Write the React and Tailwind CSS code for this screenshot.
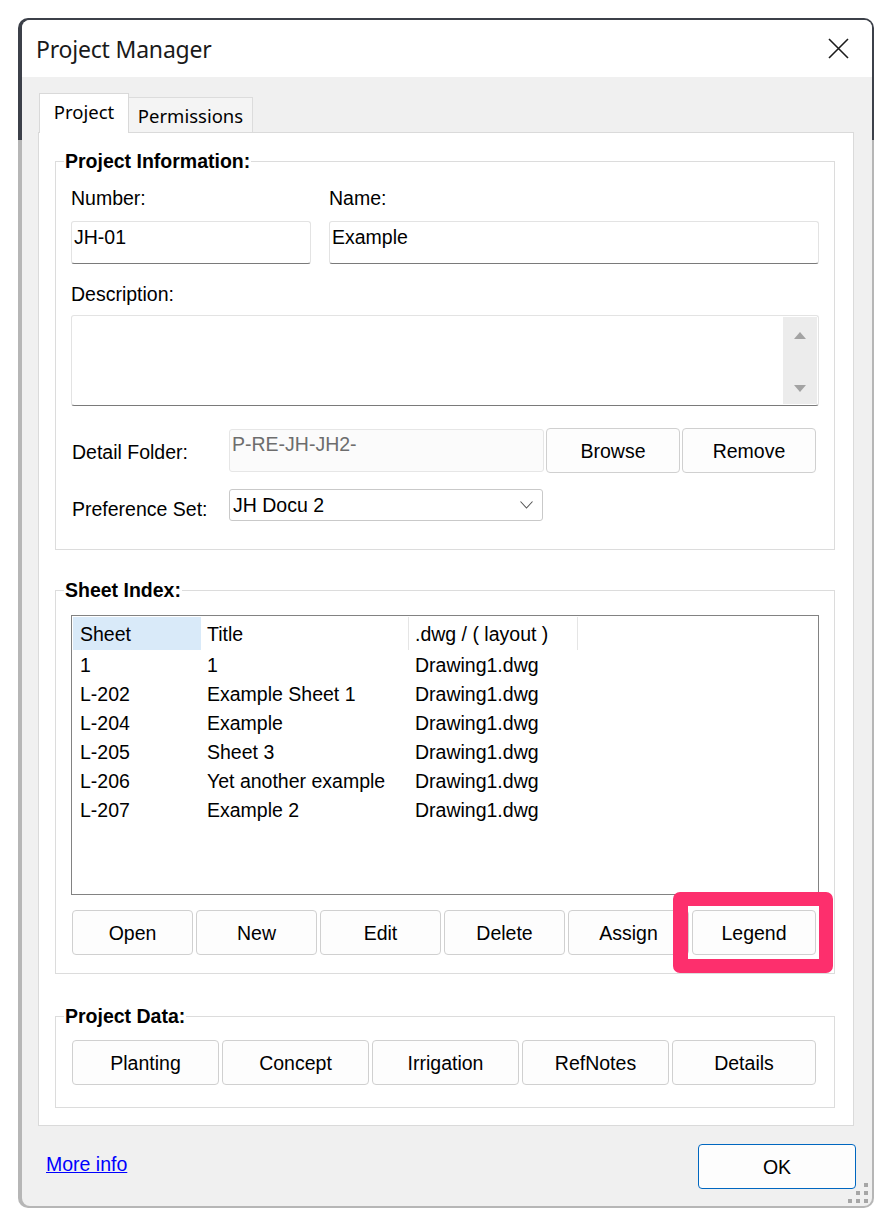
const sans = "font-['Liberation_Sans',Arial,sans-serif]"
const ui = "font-['Noto_Sans','Liberation_Sans',sans-serif]"

const btnCls = 'flex items-center justify-center h-[45px] rounded-[4px] border border-[#d0d0d0] bg-[#fdfdfd] text-black'
const inputCls = 'h-[43px] rounded-[3px] border border-[#e3e3e3] border-b-[#7a7a7a] bg-white pl-[2px] pt-[4px]'

const SHEETS = [
  ['1', '1', 'Drawing1.dwg'],
  ['L-202', 'Example Sheet 1', 'Drawing1.dwg'],
  ['L-204', 'Example', 'Drawing1.dwg'],
  ['L-205', 'Sheet 3', 'Drawing1.dwg'],
  ['L-206', 'Yet another example', 'Drawing1.dwg'],
  ['L-207', 'Example 2', 'Drawing1.dwg'],
]

function Group({ title, className, children }) {
  return (
    <fieldset className={`w-[780px] ml-[16px] border border-[#dcdcdc] ${className}`}>
      <legend className="ml-[8px] px-[1px] font-bold leading-[22px]">{title}</legend>
      {children}
    </fieldset>
  )
}

function Triangle({ up }) {
  return (
    <svg width="12" height="7" viewBox="0 0 12 7">
      <path d={up ? 'M0 7 L6 0 L12 7 Z' : 'M0 0 L12 0 L6 7 Z'} fill="#a3a3a3" />
    </svg>
  )
}

function Grip() {
  const dots = [[16, 0], [8, 8], [16, 8], [0, 16], [8, 16], [16, 16]]
  return (
    <svg className="absolute right-[4px] bottom-[3px]" width="20" height="20" viewBox="0 0 20 20">
      {dots.map(([x, y]) => (
        <rect key={`${x}-${y}`} x={x} y={y} width="4" height="4" fill="#a6a6a6" />
      ))}
    </svg>
  )
}

export default function App() {
  return (
    <div className={`w-[884px] h-[1218px] bg-white pt-[18px] pl-[18px] ${sans} text-[19.5px] leading-[22px] text-black`}>
      <div className="w-[856px] h-[1190px] rounded-[10px] bg-[linear-gradient(to_bottom,#3c4049_122px,#b6b6b6_122px)] pt-[2px] pl-[4px]">
        <div className="relative w-[850px] h-[1186px] rounded-[8px] overflow-hidden flex flex-col bg-[#f0f0f0]">
          {/* title bar */}
          <div className="h-[57px] shrink-0 bg-white flex items-center justify-between pl-[14px] pr-[23px]">
            <span className={`${ui} text-[23px] tracking-[-0.2px] text-[#1a1a1a]`}>Project Manager</span>
            <svg width="21" height="21" viewBox="0 0 21 21">
              <path d="M1 1 L20 20 M20 1 L1 20" stroke="#1b1b1b" strokeWidth="1.6" />
            </svg>
          </div>

          <div className="flex-1 pl-[16px] pt-[16px]">
            {/* tabs */}
            <div className={`h-[39px] flex items-end pl-[1px] ${ui} text-[18.5px]`}>
              <div className="relative z-10 -mb-[1px] h-[40px] w-[90px] bg-white border border-b-0 border-[#d9d9d9] flex justify-center pt-[7px]">
                Project
              </div>
              <div className="h-[35px] w-[124px] bg-[#f4f4f4] border-t border-r border-[#dcdcdc] flex justify-center pt-[7px]">
                Permissions
              </div>
            </div>

            {/* tab panel */}
            <div className="w-[816px] h-[994px] bg-white border border-[#dadada] pt-[17px]">
              <Group title="Project Information:" className="pb-[28px]">
                <div className="px-[15px]">
                  <div className="grid grid-cols-[240px_1fr] gap-x-[18px] mt-[15px]">
                    <span>Number:</span>
                    <span>Name:</span>
                    <div className={`${inputCls} mt-[12px]`}>JH-01</div>
                    <div className={`${inputCls} mt-[12px]`}>Example</div>
                  </div>
                  <div className="mt-[19px]">Description:</div>
                  <div className="mt-[10px] h-[91px] rounded-[3px] border border-[#e3e3e3] border-b-[#7a7a7a] bg-white p-[1px] flex justify-end">
                    <div className="w-[34px] bg-[#ececec] flex flex-col items-center justify-between pt-[15px] pb-[12px]">
                      <Triangle up />
                      <Triangle />
                    </div>
                  </div>
                  <div className="mt-[22px] flex items-center h-[45px]">
                    <span className="w-[158px] pl-[1px] pt-[2px]">Detail Folder:</span>
                    <div className="w-[315px] h-[43px] rounded-[3px] border border-[#e6e6e6] bg-[#fbfbfb] pl-[2px] pt-[3px] text-[#6d6d6d]">
                      P-RE-JH-JH2-
                    </div>
                    <div className={`${btnCls} w-[134px] ml-[2px]`}>Browse</div>
                    <div className={`${btnCls} w-[134px] ml-[2px]`}>Remove</div>
                  </div>
                  <div className="mt-[16px] flex items-center h-[32px]">
                    <span className="w-[158px] pl-[1px] pt-[8px]">Preference Set:</span>
                    <div className="w-[314px] h-[32px] rounded-[3px] border border-[#c9c9c9] bg-white flex items-center justify-between pl-[3px] pr-[9px]">
                      <span>JH Docu 2</span>
                      <svg width="13" height="8" viewBox="0 0 13 8">
                        <path d="M0.5 0.5 L6.5 7 L12.5 0.5" stroke="#555" strokeWidth="1.1" fill="none" />
                      </svg>
                    </div>
                  </div>
                </div>
              </Group>

              <Group title="Sheet Index:" className="mt-[29px] pb-[18px]">
                <div className="px-[15px]">
                  <div className="mt-[14px] h-[280px] border border-[#828282] bg-white p-[1px]">
                    <div className="flex h-[33px]">
                      <div className="w-[128px] bg-[#d9eaf9] pl-[7px] flex items-center">Sheet</div>
                      <div className="w-[208px] border-r border-[#e5e5e5] pl-[6px] flex items-center">Title</div>
                      <div className="w-[169px] border-r border-[#e5e5e5] pl-[6px] flex items-center">.dwg / ( layout )</div>
                    </div>
                    {SHEETS.map(([sheet, title, dwg]) => (
                      <div key={sheet} className="flex h-[29px] items-center">
                        <div className="w-[128px] pl-[7px]">{sheet}</div>
                        <div className="w-[208px] pl-[6px]">{title}</div>
                        <div className="w-[169px] pl-[6px]">{dwg}</div>
                      </div>
                    ))}
                  </div>
                  <div className="mt-[15px] ml-[1px] mr-[3px] flex gap-[3px]">
                    {['Open', 'New', 'Edit', 'Delete', 'Assign'].map((b) => (
                      <div key={b} className={`${btnCls} w-[121px]`}>{b}</div>
                    ))}
                    <div className="relative flex-1 flex">
                      <div className={`${btnCls} flex-1`}>Legend</div>
                      <div className="absolute -left-[19px] -right-[17px] -top-[18px] -bottom-[18px] z-10 rounded-[7px] border-[14px] border-l-[15px] border-[#fd2f6d]" />
                    </div>
                  </div>
                </div>
              </Group>

              <Group title="Project Data:" className="mt-[31px] pb-[22px]">
                <div className="mt-[13px] ml-[16px] mr-[18px] flex gap-[3px]">
                  {['Planting', 'Concept', 'Irrigation', 'RefNotes'].map((b) => (
                    <div key={b} className={`${btnCls} w-[147px]`}>{b}</div>
                  ))}
                  <div className={`${btnCls} flex-1`}>Details</div>
                </div>
              </Group>
            </div>

            {/* footer */}
            <div className="flex justify-between items-start pt-[18px] w-[816px]">
              <a className="ml-[8px] mt-[9px] text-[#0000ff] underline">More info</a>
              <div className="-mr-[2px] w-[158px] h-[45px] rounded-[4px] border border-[#0067c0] bg-[#fdfdfd] flex items-center justify-center">
                OK
              </div>
            </div>
          </div>
          <Grip />
        </div>
      </div>
    </div>
  )
}
